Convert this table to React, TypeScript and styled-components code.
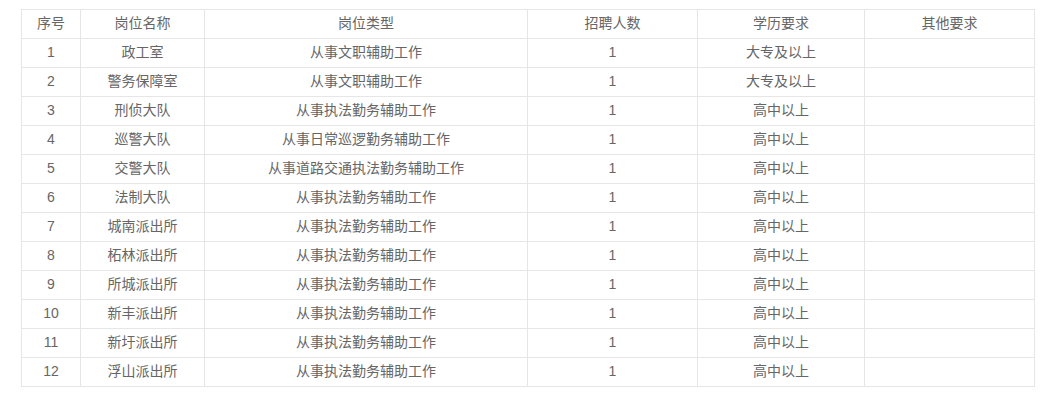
import React from 'react';
import styled, { createGlobalStyle } from 'styled-components';

const GlobalStyle = createGlobalStyle`
  body {
    margin: 0;
    background: #fff;
    font-family: 'Liberation Sans', 'Noto Sans CJK SC', sans-serif;
  }
`;

const Wrapper = styled.div`
  padding: 9px 0 0 21px;
`;

const Table = styled.table`
  width: 1013px;
  border-collapse: collapse;
  table-layout: fixed;
  border: 1px solid #e6e6e6;
  color: #666;
  font-size: 14px;
`;

const Cell = styled.td`
  border: 1px solid #e6e6e6;
  padding: 0 0 1px;
  height: 27px;
  line-height: 27px;
  text-align: center;
  white-space: nowrap;
  font-weight: normal;
`;

const HeadCell = styled(Cell).attrs({ as: 'th' })``;

const columns = [
  { title: '序号', width: 59 },
  { title: '岗位名称', width: 124 },
  { title: '岗位类型', width: 323 },
  { title: '招聘人数', width: 170 },
  { title: '学历要求', width: 167 },
  { title: '其他要求', width: 170 },
];

const enforce = '从事执法勤务辅助工作';

const rows = [
  ['政工室', '从事文职辅助工作', '大专及以上'],
  ['警务保障室', '从事文职辅助工作', '大专及以上'],
  ['刑侦大队', enforce, '高中以上'],
  ['巡警大队', '从事日常巡逻勤务辅助工作', '高中以上'],
  ['交警大队', '从事道路交通执法勤务辅助工作', '高中以上'],
  ['法制大队', enforce, '高中以上'],
  ['城南派出所', enforce, '高中以上'],
  ['柘林派出所', enforce, '高中以上'],
  ['所城派出所', enforce, '高中以上'],
  ['新丰派出所', enforce, '高中以上'],
  ['新圩派出所', enforce, '高中以上'],
  ['浮山派出所', enforce, '高中以上'],
];

const App = () => (
  <>
    <GlobalStyle />
    <Wrapper>
      <Table>
        <colgroup>
          {columns.map((c) => (
            <col key={c.title} style={{ width: c.width }} />
          ))}
        </colgroup>
        <thead>
          <tr>
            {columns.map((c) => (
              <HeadCell key={c.title}>{c.title}</HeadCell>
            ))}
          </tr>
        </thead>
        <tbody>
          {rows.map(([name, type, edu], i) => (
            <tr key={name}>
              <Cell>{i + 1}</Cell>
              <Cell>{name}</Cell>
              <Cell>{type}</Cell>
              <Cell>1</Cell>
              <Cell>{edu}</Cell>
              <Cell />
            </tr>
          ))}
        </tbody>
      </Table>
    </Wrapper>
  </>
);

export default App;
